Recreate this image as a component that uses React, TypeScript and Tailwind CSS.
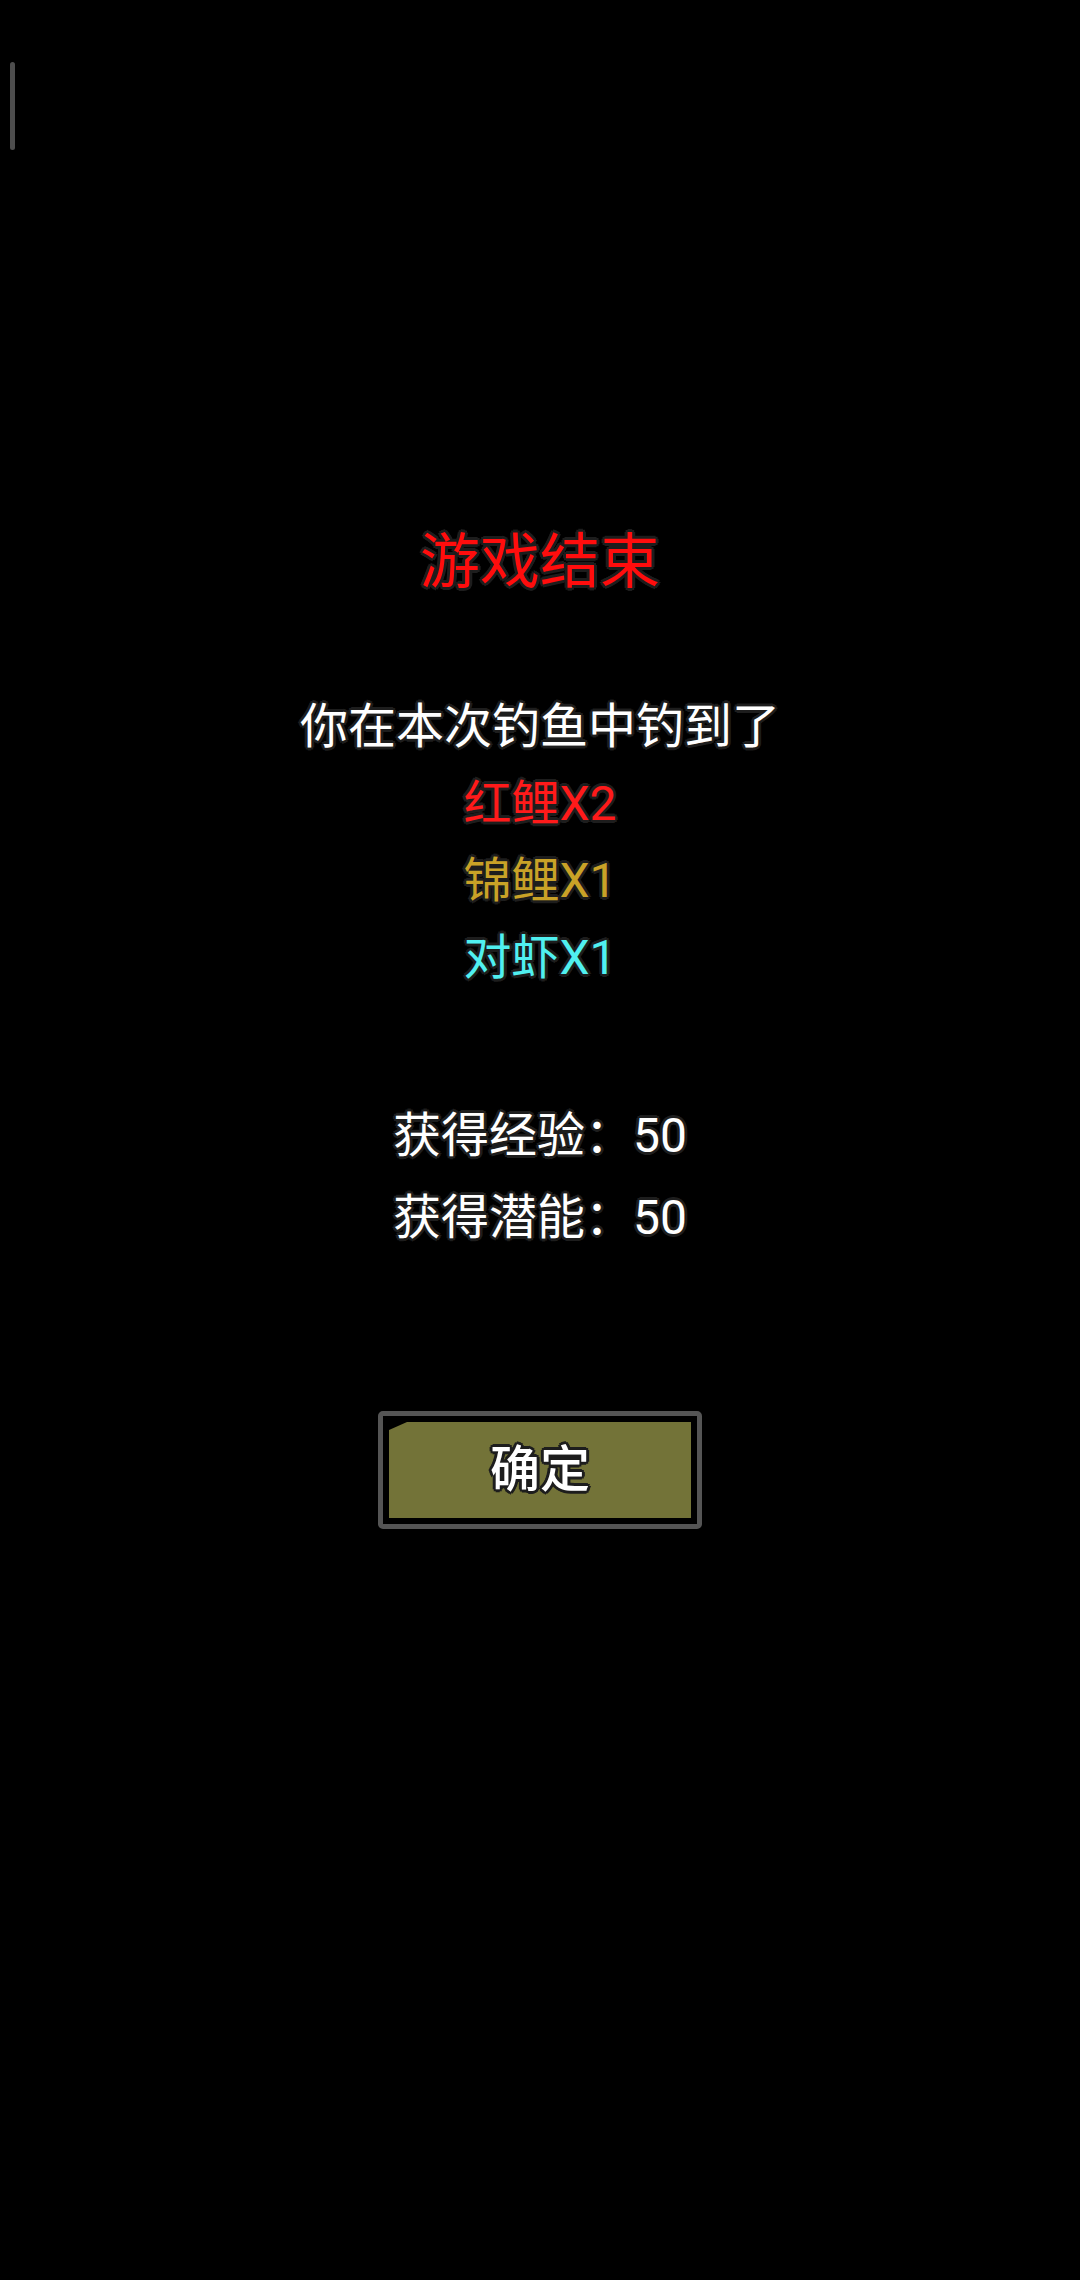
import React from 'react';

const outline =
  '[text-shadow:0_0_3px_#1e1e1e,3px_0_0_#1e1e1e,-3px_0_0_#1e1e1e,0_3px_0_#1e1e1e,0_-3px_0_#1e1e1e,2px_2px_0_#1e1e1e,-2px_-2px_0_#1e1e1e,2px_-2px_0_#1e1e1e,-2px_2px_0_#1e1e1e]';

const catches = [
  { name: '红鲤X2', color: 'text-[#ff1a1a]' },
  { name: '锦鲤X1', color: 'text-[#c9a227]' },
  { name: '对虾X1', color: 'text-[#50f0f0]' },
];

const rewards = [
  { label: '获得经验：', value: 50 },
  { label: '获得潜能：', value: 50 },
];

export default function App() {
  return (
    <div className="relative w-[1080px] h-[2280px] bg-black font-['Roboto','Noto_Sans_CJK_SC',sans-serif] overflow-hidden">
      {/* scroll indicator */}
      <div className="absolute left-[10px] top-[62px] w-[5px] h-[88px] rounded-full bg-[#4d4d4d]" />

      <div className="flex flex-col items-center pt-[523px]">
        <h1 className={`text-[60px] leading-[80px] text-[#ff0d0d] font-normal ${outline}`}>游戏结束</h1>

        <div className="mt-[85px] flex flex-col items-center">
          <p className={`text-[48px] leading-[77px] text-white ${outline}`}>你在本次钓鱼中钓到了</p>
          {catches.map((c) => (
            <p key={c.name} className={`text-[48px] leading-[77px] ${c.color} ${outline}`}>
              {c.name}
            </p>
          ))}
        </div>

        <div className="mt-[99px] flex flex-col items-center">
          {rewards.map((r) => (
            <p key={r.label} className={`text-[48px] leading-[82px] text-white ${outline}`}>
              {r.label}
              {r.value}
            </p>
          ))}
        </div>

        <button className="mt-[152px] w-[324px] h-[118px] border-[5px] border-[#555555] rounded-[5px] bg-black p-[6px]">
          <div className="w-full h-full bg-[#737338] [clip-path:polygon(0_8px,18px_0,100%_0,100%_100%,0_100%)] flex items-center justify-center">
            <span className={`text-[50px] leading-none font-medium text-white ${outline}`}>确定</span>
          </div>
        </button>
      </div>
    </div>
  );
}
